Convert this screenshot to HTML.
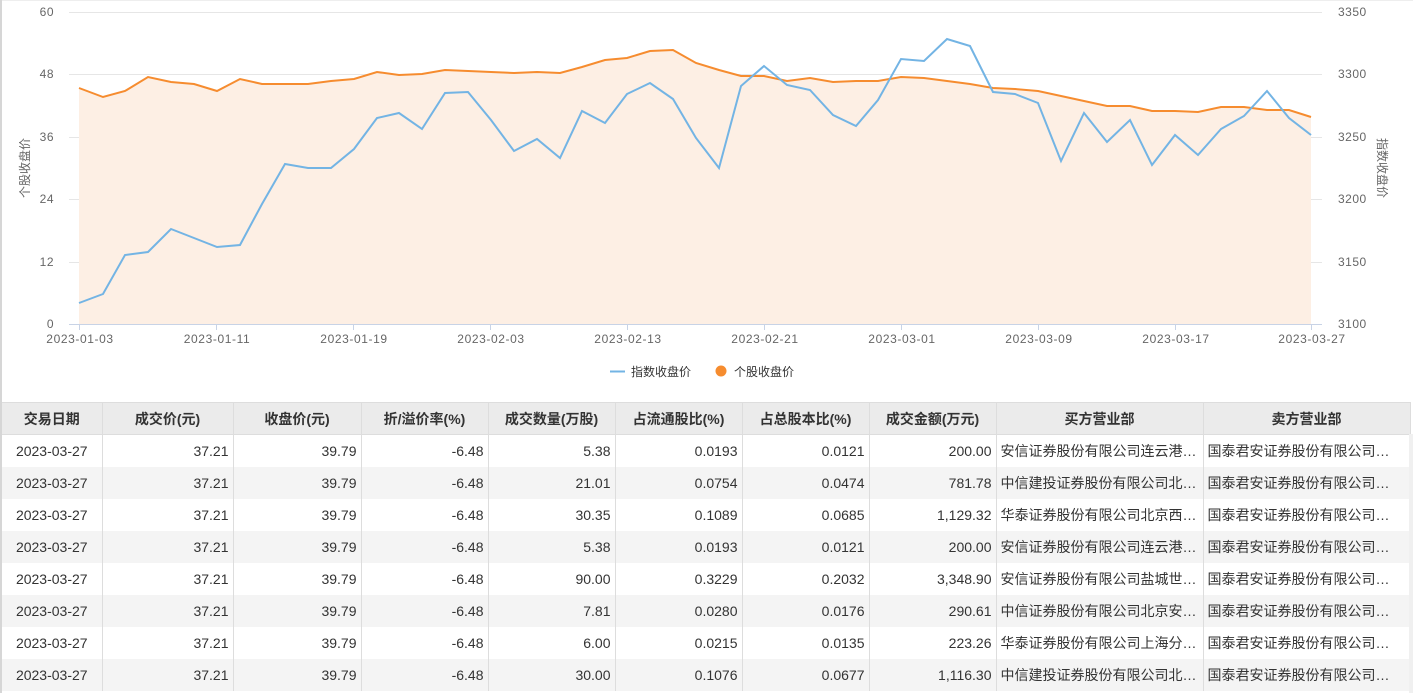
<!DOCTYPE html>
<html><head><meta charset="utf-8"><style>
*{margin:0;padding:0;box-sizing:border-box}
body{width:1413px;height:693px;overflow:hidden;background:#fff;font-family:"Liberation Sans","Noto Sans CJK SC",sans-serif;position:relative}
#lb{position:absolute;left:0;top:0;width:2px;height:693px;background:#d6d6d6}
#tb{position:absolute;left:0;top:0;width:1413px;height:1px;background:#eee}
#rs{position:absolute;left:1409px;top:434px;width:4px;height:259px;background:#f0f0f0}
svg{position:absolute;left:0;top:0}
table{position:absolute;left:2px;top:402px;border-collapse:collapse;table-layout:fixed;width:1408px;font-size:14px;color:#333}
th{background:#ebebeb;height:32px;font-weight:bold;border-right:1px solid #ddd;border-top:1px solid #ddd;border-bottom:1px solid #ddd}
td{height:32px;border-right:1px solid #ddd;white-space:nowrap;overflow:hidden;text-overflow:ellipsis;padding:0 4px;text-align:right}
td:first-child{text-align:center}
td.l{text-align:left}
tbody tr:nth-child(even) td{background:#f4f4f4}
tbody tr:nth-child(odd) td{background:#fff}
</style></head><body>
<div id="tb"></div><div id="lb"></div>
<svg width="1413" height="400" font-family="Liberation Sans,Noto Sans CJK SC,sans-serif">
<g stroke="#e6e6e6" stroke-width="1">
<line x1="69" y1="12.5" x2="1322" y2="12.5"/><line x1="69" y1="74.5" x2="1322" y2="74.5"/><line x1="69" y1="137.5" x2="1322" y2="137.5"/><line x1="69" y1="199.5" x2="1322" y2="199.5"/><line x1="69" y1="262.5" x2="1322" y2="262.5"/>
</g>
<polygon fill="#fdefe4" points="79,324 79,88 103,97 125,91 148,77 171,82 194,84 217,91 240,79 262,84 285,84 308,84 331,81 354,79 377,72 399,75 422,74 445,70 468,71 491,72 514,73 537,72 560,73 582,67 605,60 627,58 650,51 673,50 696,63 719,70 741,76 764,76 787,81 810,78 833,82 856,81 878,81 901,77 924,78 947,81 970,84 993,88 1015,89 1038,91 1061,96 1084,101 1107,106 1130,106 1152,111 1175,111 1198,112 1221,107 1244,107 1267,110 1289,110 1311,117 1311,324"/>
<line x1="69" y1="324.5" x2="1322" y2="324.5" stroke="#c8d3e6"/>
<g stroke="#c8d3e6"><line x1="79.5" y1="324" x2="79.5" y2="330"/><line x1="216.5" y1="324" x2="216.5" y2="330"/><line x1="353.5" y1="324" x2="353.5" y2="330"/><line x1="490.5" y1="324" x2="490.5" y2="330"/><line x1="627.5" y1="324" x2="627.5" y2="330"/><line x1="764.5" y1="324" x2="764.5" y2="330"/><line x1="901.5" y1="324" x2="901.5" y2="330"/><line x1="1038.5" y1="324" x2="1038.5" y2="330"/><line x1="1175.5" y1="324" x2="1175.5" y2="330"/><line x1="1311.5" y1="324" x2="1311.5" y2="330"/></g>
<polyline fill="none" stroke="#f68c2f" stroke-width="2" points="79,88 103,97 125,91 148,77 171,82 194,84 217,91 240,79 262,84 285,84 308,84 331,81 354,79 377,72 399,75 422,74 445,70 468,71 491,72 514,73 537,72 560,73 582,67 605,60 627,58 650,51 673,50 696,63 719,70 741,76 764,76 787,81 810,78 833,82 856,81 878,81 901,77 924,78 947,81 970,84 993,88 1015,89 1038,91 1061,96 1084,101 1107,106 1130,106 1152,111 1175,111 1198,112 1221,107 1244,107 1267,110 1289,110 1311,117"/>
<polyline fill="none" stroke="#73b4e4" stroke-width="2" points="79,303 103,294 125,255 148,252 171,229 194,238 217,247 240,245 262,204 285,164 308,168 331,168 354,149 377,118 399,113 422,129 445,93 468,92 491,120 514,151 537,139 560,158 582,111 605,123 627,94 650,83 673,99 696,138 719,168 741,86 764,66 787,85 810,90 833,115 856,126 878,100 901,59 924,61 947,39 970,46 993,92 1015,94 1038,103 1061,161 1084,113 1107,142 1130,120 1152,165 1175,135 1198,155 1221,129 1244,116 1267,91 1289,118 1311,135"/>
<g font-size="12" fill="#666" text-anchor="end" letter-spacing="0.5">
<text x="54" y="16">60</text><text x="54" y="78">48</text><text x="54" y="141">36</text><text x="54" y="203">24</text><text x="54" y="266">12</text><text x="54" y="328">0</text>
</g>
<g font-size="12" fill="#666" letter-spacing="0.5">
<text x="1338" y="16">3350</text><text x="1338" y="78">3300</text><text x="1338" y="141">3250</text><text x="1338" y="203">3200</text><text x="1338" y="266">3150</text><text x="1338" y="328">3100</text>
</g>
<g font-size="12" fill="#666" text-anchor="middle" letter-spacing="0.6">
<text x="80" y="343">2023-01-03</text><text x="217" y="343">2023-01-11</text><text x="354" y="343">2023-01-19</text><text x="491" y="343">2023-02-03</text><text x="628" y="343">2023-02-13</text><text x="765" y="343">2023-02-21</text><text x="902" y="343">2023-03-01</text><text x="1039" y="343">2023-03-09</text><text x="1176" y="343">2023-03-17</text><text x="1312" y="343">2023-03-27</text>
</g>
<text transform="translate(29,168) rotate(-90)" font-size="12" fill="#666" text-anchor="middle">个股收盘价</text>
<text transform="translate(1378,168) rotate(90)" font-size="12" fill="#666" text-anchor="middle">指数收盘价</text>
<line x1="610" y1="371.5" x2="625" y2="371.5" stroke="#73b4e4" stroke-width="2"/>
<text x="631" y="376" font-size="12" fill="#333">指数收盘价</text>
<circle cx="721" cy="371" r="5.5" fill="#f68c2f"/>
<text x="734" y="376" font-size="12" fill="#333">个股收盘价</text>
</svg>
<table>
<colgroup><col style="width:100px"><col style="width:131px"><col style="width:128px"><col style="width:127px"><col style="width:127px"><col style="width:127px"><col style="width:127px"><col style="width:127px"><col style="width:207px"><col style="width:207px"></colgroup>
<thead><tr><th>交易日期</th><th>成交价(元)</th><th>收盘价(元)</th><th>折/溢价率(%)</th><th>成交数量(万股)</th><th>占流通股比(%)</th><th>占总股本比(%)</th><th>成交金额(万元)</th><th>买方营业部</th><th>卖方营业部</th></tr></thead>
<tbody>
<tr><td>2023-03-27</td><td>37.21</td><td>39.79</td><td>-6.48</td><td>5.38</td><td>0.0193</td><td>0.0121</td><td>200.00</td><td class="l">安信证券股份有限公司连云港…</td><td class="l">国泰君安证券股份有限公司…</td></tr>
<tr><td>2023-03-27</td><td>37.21</td><td>39.79</td><td>-6.48</td><td>21.01</td><td>0.0754</td><td>0.0474</td><td>781.78</td><td class="l">中信建投证券股份有限公司北…</td><td class="l">国泰君安证券股份有限公司…</td></tr>
<tr><td>2023-03-27</td><td>37.21</td><td>39.79</td><td>-6.48</td><td>30.35</td><td>0.1089</td><td>0.0685</td><td>1,129.32</td><td class="l">华泰证券股份有限公司北京西…</td><td class="l">国泰君安证券股份有限公司…</td></tr>
<tr><td>2023-03-27</td><td>37.21</td><td>39.79</td><td>-6.48</td><td>5.38</td><td>0.0193</td><td>0.0121</td><td>200.00</td><td class="l">安信证券股份有限公司连云港…</td><td class="l">国泰君安证券股份有限公司…</td></tr>
<tr><td>2023-03-27</td><td>37.21</td><td>39.79</td><td>-6.48</td><td>90.00</td><td>0.3229</td><td>0.2032</td><td>3,348.90</td><td class="l">安信证券股份有限公司盐城世…</td><td class="l">国泰君安证券股份有限公司…</td></tr>
<tr><td>2023-03-27</td><td>37.21</td><td>39.79</td><td>-6.48</td><td>7.81</td><td>0.0280</td><td>0.0176</td><td>290.61</td><td class="l">中信证券股份有限公司北京安…</td><td class="l">国泰君安证券股份有限公司…</td></tr>
<tr><td>2023-03-27</td><td>37.21</td><td>39.79</td><td>-6.48</td><td>6.00</td><td>0.0215</td><td>0.0135</td><td>223.26</td><td class="l">华泰证券股份有限公司上海分…</td><td class="l">国泰君安证券股份有限公司…</td></tr>
<tr><td>2023-03-27</td><td>37.21</td><td>39.79</td><td>-6.48</td><td>30.00</td><td>0.1076</td><td>0.0677</td><td>1,116.30</td><td class="l">中信建投证券股份有限公司北…</td><td class="l">国泰君安证券股份有限公司…</td></tr>
</tbody></table>
<div id="rs"></div>
</body></html>
